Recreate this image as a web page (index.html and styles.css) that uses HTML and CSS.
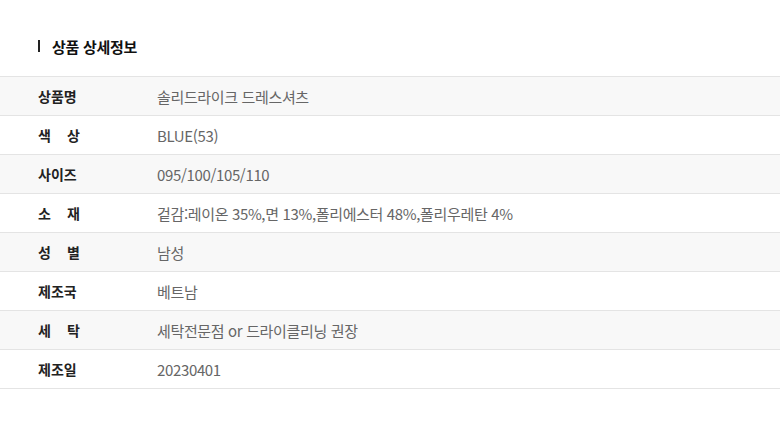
FILE: index.html
```html
<!DOCTYPE html>
<html lang="ko">
<head>
<meta charset="utf-8">
<link rel="stylesheet" href="styles.css">
</head>
<body>
<section class="detail">
  <h2 class="title"><span class="bar"></span>상품 상세정보</h2>
  <div class="table">
    <div class="row alt"><div class="label"><span>상품명</span></div><div class="value">솔리드라이크 드레스셔츠</div></div>
    <div class="row"><div class="label spread"><span>색</span><span>상</span></div><div class="value">BLUE(53)</div></div>
    <div class="row alt"><div class="label"><span>사이즈</span></div><div class="value">095/100/105/110</div></div>
    <div class="row"><div class="label spread"><span>소</span><span>재</span></div><div class="value">겉감:레이온 35%,면 13%,폴리에스터 48%,폴리우레탄 4%</div></div>
    <div class="row alt"><div class="label spread"><span>성</span><span>별</span></div><div class="value">남성</div></div>
    <div class="row"><div class="label"><span>제조국</span></div><div class="value">베트남</div></div>
    <div class="row alt"><div class="label spread"><span>세</span><span>탁</span></div><div class="value">세탁전문점 or 드라이클리닝 권장</div></div>
    <div class="row"><div class="label"><span>제조일</span></div><div class="value">20230401</div></div>
  </div>
</section>
</body>
</html>
```

FILE: styles.css
```css
* { box-sizing: border-box; }
html, body { margin: 0; padding: 0; background: #fff; }
body {
  font-family: "Noto Sans CJK KR", "Noto Sans", sans-serif;
  color: #222;
}
.detail { padding-top: 36px; }
.title {
  margin: 0 0 20px 38px;
  height: 20px;
  display: flex;
  align-items: center;
  gap: 12px;
  font-size: 15px;
  font-weight: 700;
  color: #111;
  letter-spacing: -0.3px;
}
.bar {
  width: 2px;
  height: 12px;
  background: #222;
}
.table { border-top: 1px solid #e4e4e4; }
.row {
  display: flex;
  align-items: center;
  height: 39px;
  border-bottom: 1px solid #e4e4e4;
}
.row.alt { background: #f8f8f8; }
.label {
  width: 157px;
  padding-left: 38px;
  font-size: 14px;
  font-weight: 700;
  color: #222;
  display: flex;
}
.label.spread {
  width: 80px;
  margin-right: 77px;
  justify-content: space-between;
}
.value {
  font-size: 15px;
  color: #666;
  letter-spacing: -0.35px;
}
```
